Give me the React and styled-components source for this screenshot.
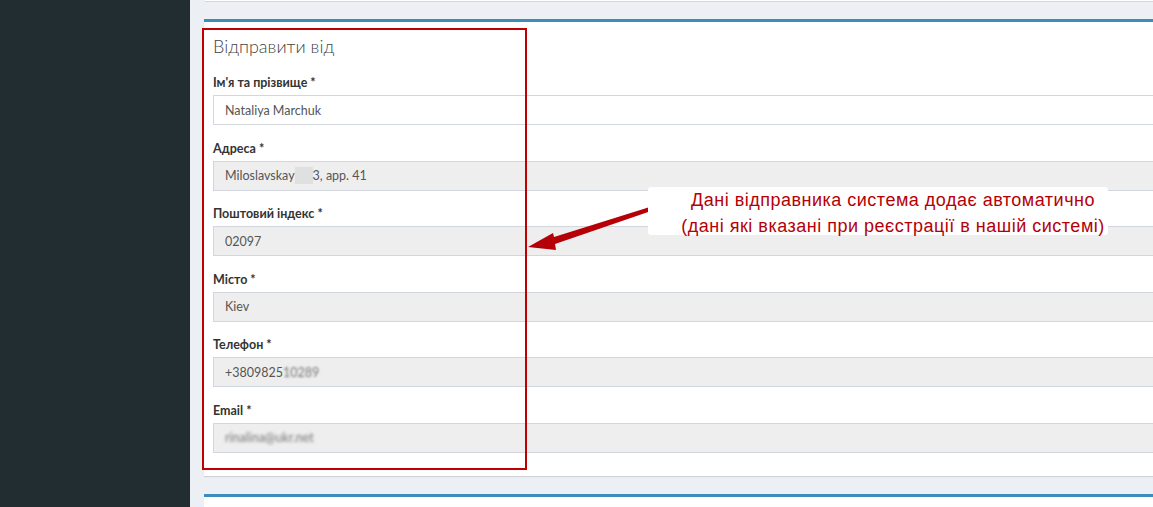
import React from "react";
import styled, { createGlobalStyle } from "styled-components";

const GlobalStyle = createGlobalStyle`
  html, body { margin: 0; padding: 0; }
  body {
    font-family: Lato, "Noto Sans", sans-serif;
    background: #ecf0f5;
    overflow: hidden;
  }
`;

const fields = [
  { label: "Ім'я та прізвище *", value: "Nataliya Marchuk", editable: true },
  { label: "Адреса *", value: "address" },
  { label: "Поштовий індекс *", value: "02097" },
  { label: "Місто *", value: "Kiev" },
  { label: "Телефон *", value: "phone" },
  { label: "Email *", value: "email" },
];

const App = () => {
  return (
    <>
      <GlobalStyle />
      <Page>
        <Sidebar />
        <Content>
          <PrevBox />
          <Box>
            <Title>Відправити від</Title>
            <Form>
              {fields.map((f) => (
                <Group key={f.label}>
                  <Label>{f.label}</Label>
                  <Input $editable={f.editable}>{renderValue(f.value)}</Input>
                </Group>
              ))}
            </Form>
            <Highlight />
            <Arrow width="130" height="50" viewBox="0 0 130 50">
              <polygon points="128,4 127,0 28,31 27,27 2,41 30,44 29,38" fill="#b50007" />
            </Arrow>
            <Note>
              Дані відправника система додає автоматично
              <br />
              (дані які вказані при реєстрації в нашій системі)
            </Note>
          </Box>
          <NextBox />
        </Content>
      </Page>
    </>
  );
};

const renderValue = (v) => {
  if (v === "address")
    return (
      <>
        Miloslavskay<Mask $w={18} />3, app. 41
      </>
    );
  if (v === "phone")
    return (
      <>
        +3809825<Blur>10289</Blur>
      </>
    );
  if (v === "email") return <Blur $strong>rinalina@ukr.net</Blur>;
  return v;
};

export default App;

const Page = styled.div`
  display: flex;
  width: 1153px;
  height: 507px;
  overflow: hidden;
`;

const Sidebar = styled.aside`
  width: 190px;
  flex-shrink: 0;
  background: #222d32;
`;

const Content = styled.main`
  flex: 1;
  padding-left: 14px;
  overflow: hidden;
  background: #ecf0f5;
`;

const PrevBox = styled.div`
  height: 1px;
  margin-left: 1px;
  width: calc(100% + 20px);
  background: #fff;
  border-bottom: 1px solid #d2d6de;
  margin-bottom: 17px;
`;

const Box = styled.section`
  position: relative;
  width: calc(100% + 20px);
  background: #fff;
  border-top: 3px solid #3c8dbc;
  box-shadow: 0 1px 1px rgba(0, 0, 0, 0.12);
  padding: 13px 0 23px 9px;
  box-sizing: border-box;
  margin-bottom: 18px;
`;

const NextBox = styled.div`
  width: calc(100% + 20px);
  height: 40px;
  background: #fff;
  border-top: 3px solid #3c8dbc;
`;

const Title = styled.h3`
  margin: 0 0 18px;
  font-size: 18px;
  line-height: 22px;
  font-weight: 300;
  color: #444;
`;

const Form = styled.div`
  display: flex;
  flex-direction: column;
  gap: 15.5px;
`;

const Group = styled.div``;

const Label = styled.label`
  display: block;
  font-size: 12.5px;
  line-height: 15px;
  font-weight: 700;
  color: #333;
  margin-bottom: 5px;
`;

const Input = styled.div`
  height: 30px;
  box-sizing: border-box;
  border: 1px solid #d2d6de;
  background: ${(p) => (p.$editable ? "#fff" : "#eee")};
  padding: 0 11px;
  display: flex;
  align-items: center;
  font-size: 12.5px;
  color: #555;
  white-space: nowrap;
`;

const Mask = styled.span`
  display: inline-block;
  width: ${(p) => p.$w}px;
  height: 17px;
  background: #e0e0e0;
`;

const Blur = styled.span`
  filter: blur(${(p) => (p.$strong ? 1.6 : 1.2)}px);
  color: #777;
`;

const Highlight = styled.div`
  position: absolute;
  left: -2px;
  top: 6px;
  width: 325px;
  height: 442px;
  box-sizing: border-box;
  border: 2px solid #c00000;
  pointer-events: none;
`;

const Arrow = styled.svg`
  position: absolute;
  left: 322px;
  top: 184px;
`;

const Note = styled.div`
  position: absolute;
  left: 444px;
  top: 165px;
  width: 460px;
  height: 48px;
  padding-left: 30px;
  box-sizing: border-box;
  background: #fff;
  border-radius: 3px;
  font-family: "Liberation Sans", Arial, sans-serif;
  font-size: 18px;
  letter-spacing: 0.5px;
  line-height: 26px;
  color: #b50007;
  text-align: center;
  white-space: nowrap;
`;
